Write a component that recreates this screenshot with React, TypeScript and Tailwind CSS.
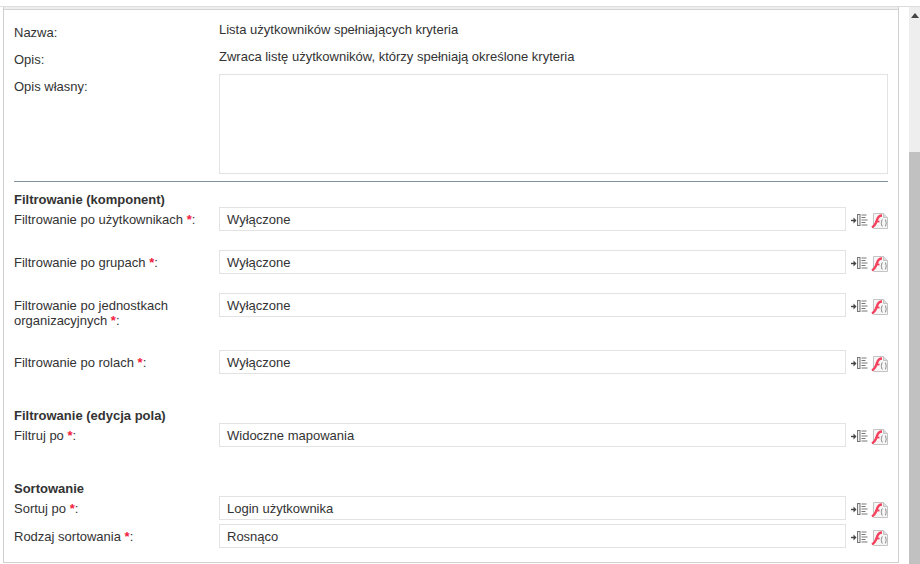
const Icons = () => (
  <div className="ml-[5px] flex h-[24px] items-start">
    <svg width="17" height="14" viewBox="0 0 17 14" className="mt-[6px]">
      <path d="M0 7.500H3" stroke="#444" strokeWidth="1.400" />
      <path d="M2.500 4.500V10.500L5.500 7.500Z" fill="#444" />
      <rect x="6.500" y="1.500" width="2.500" height="11" fill="#eeeeee" stroke="#777" strokeWidth="1" />
      <path d="M10.500 2H15.500M10.500 4.500H14.500M10.500 7H16.500M10.500 9.500H14.500M10.500 12H16.500" stroke="#777" strokeWidth="1" />
    </svg>
    <svg width="18" height="16" viewBox="0 0 18 16" className="ml-[3px] mt-[6px]">
      <path d="M2.500 .5H12.500L16.500 4.500V15.500H2.500Z" fill="#f6f6f6" stroke="#c4c4c4" strokeWidth="1" />
      <path d="M12.500 .5V4.500H16.500" fill="#dedede" stroke="#c4c4c4" strokeWidth="1" />
      <path d="M.8 14.200C4 13.500 5 10 6.200 6.500C7 4 8.500 2.500 11 2.500" fill="none" stroke="#f4425e" strokeWidth="2.400" />
      <path d="M4.500 8.500H8.500" stroke="#f4425e" strokeWidth="1.800" />
      <path d="M11.500 6.500C10.300 6.500 11 9.500 10 10C11 10.500 10.300 13.500 11.500 13.500M14 6.500C15.200 6.500 14.500 9.500 15.500 10C14.500 10.500 15.200 13.500 14 13.500" fill="none" stroke="#808080" strokeWidth="0.900" />
    </svg>
  </div>
);

const Row = ({ label, value, className = "" }: { label: React.ReactNode; value: string; className?: string }) => (
  <div className={`flex items-start ${className}`}>
    <div className="w-[205px] pr-[10px] pt-[5px] leading-[15px]">{label}</div>
    <div className="flex h-[24px] w-[627px] items-center border border-[#e3e3e3] bg-white pl-[7px] pt-[2px] text-[13px]">{value}</div>
    <Icons />
  </div>
);

const Star = () => <span className="font-bold text-[#f0203c]">*</span>;

export default function App() {
  return (
    <div className="relative h-[564px] w-[920px] overflow-hidden bg-white font-['Liberation_Sans',Arial,sans-serif] text-[13px] text-[#333]">
      <div className="absolute right-0 top-[7px] flex h-[557px] w-[11px] flex-col bg-[#eeeeee]">
        <div className="h-[145px] pt-[6px]">
          <div className="mx-auto h-0 w-0 border-x-[4px] border-b-[5px] border-x-transparent border-b-[#444]" />
        </div>
        <div className="flex-1 bg-[#c1c1c1]" />
      </div>

      <div className="h-[7px] w-full border-b border-[#dddddd]" />
      <div className="ml-[3px] h-[556px] w-[896px] border-x border-b border-[#d0d0d0]">
        <div className="h-[3px] border-b border-[#d4d4d4] bg-[#eeeeee]" />
        <div className="pl-[10px] pt-[12px]">
          <div className="flex h-[27px]">
            <div className="w-[205px] pt-[3px] leading-[15px]">Nazwa:</div>
            <div className="leading-[15px]">Lista użytkowników spełniających kryteria</div>
          </div>
          <div className="flex h-[25px]">
            <div className="w-[205px] pt-[3px] leading-[15px]">Opis:</div>
            <div className="leading-[15px]">Zwraca listę użytkowników, którzy spełniają określone kryteria</div>
          </div>
          <div className="flex">
            <div className="w-[205px] pt-[5px] leading-[15px]">Opis własny:</div>
            <div className="h-[100px] w-[669px] border border-[#e3e3e3]" />
          </div>
          <div className="mt-[7px] h-px w-[874px] bg-[#7f929e]" />

          <div className="mt-[10px] h-[15px] font-bold leading-[15px]">Filtrowanie (komponent)</div>
          <Row label={<>Filtrowanie po użytkownikach <Star />:</>} value="Wyłączone" />
          <Row className="mt-[19px]" label={<>Filtrowanie po grupach <Star />:</>} value="Wyłączone" />
          <Row className="mt-[19px]" label={<>Filtrowanie po jednostkach organizacyjnych <Star />:</>} value="Wyłączone" />
          <Row className="mt-[22px]" label={<>Filtrowanie po rolach <Star />:</>} value="Wyłączone" />

          <div className="mt-[34px] h-[15px] font-bold leading-[15px]">Filtrowanie (edycja pola)</div>
          <Row label={<>Filtruj po <Star />:</>} value="Widoczne mapowania" />

          <div className="mt-[34px] h-[15px] font-bold leading-[15px]">Sortowanie</div>
          <Row label={<>Sortuj po <Star />:</>} value="Login użytkownika" />
          <Row className="mt-[4px]" label={<>Rodzaj sortowania <Star />:</>} value="Rosnąco" />
        </div>
      </div>
    </div>
  );
}
